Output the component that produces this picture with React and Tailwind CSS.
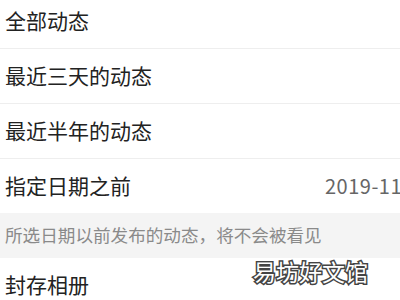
export default function App() {
  const rows = ["全部动态", "最近三天的动态", "最近半年的动态"];
  const font = { fontFamily: '"Noto Sans CJK SC", "Noto Sans", sans-serif' };

  return (
    <div className="w-[400px] h-[300px] overflow-hidden bg-white relative" style={font}>
      <div className="-mt-[6px]">
        {rows.map((r) => (
          <div
            key={r}
            className="h-[55px] flex items-center pl-[5px] border-b border-[#eeeeee] text-[21px] text-[#222222]"
          >
            {r}
          </div>
        ))}
        <div className="h-[54px] flex items-center pl-[5px] text-[21px] text-[#222222]">
          <span className="flex-1">指定日期之前</span>
          <span className="w-[75px] shrink-0 whitespace-nowrap text-[20px] tracking-[0.5px] text-[#666666]">
            2019-11
          </span>
        </div>
        <div className="h-[45px] flex items-center pl-[5px] bg-[#f4f4f4] text-[17.6px] text-[#8a8a8a] whitespace-nowrap">
          所选日期以前发布的动态，将不会被看见
        </div>
        <div className="h-[54px] flex items-center pl-[5px] text-[21px] text-[#222222]">
          封存相册
        </div>
      </div>
      <div
        className="absolute left-[253px] top-[254px] text-[23px] text-white"
        style={{ WebkitTextStroke: "3px #444444", paintOrder: "stroke fill" }}
      >
        易坊好文馆
      </div>
    </div>
  );
}
